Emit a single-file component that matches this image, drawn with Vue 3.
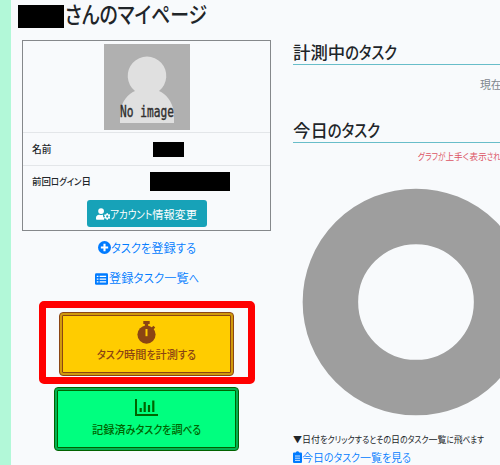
<script setup>
import { h } from 'vue'

// UI text with full-width kanji and condensed kana, fitted to a given line width
const UiText = ({ text, size, width }) => {
  const runs = text.match(/[ぁ-んァ-ヶー]+|[^ぁ-んァ-ヶー]+/g)
  const isKana = (run) => /^[ぁ-んァ-ヶー]/.test(run)
  const kanji = runs.filter((r) => !isKana(r)).join('').length
  const kana = text.length - kanji
  const kanaWidth = kana ? (width - kanji * size) / kana : 0
  let x = 0
  const nodes = runs.map((run) => {
    const w = run.length * (isKana(run) ? kanaWidth : size)
    const node = h('text', { x, y: size * 0.94, textLength: w, lengthAdjust: 'spacingAndGlyphs' }, run)
    x += w
    return node
  })
  return h('svg', { class: 'ui-text', width, height: size, 'font-size': size }, nodes)
}
UiText.props = ['text', 'size', 'width']
</script>

<template>
  <div class="page">
    <aside class="edge"></aside>
    <main class="content">
      <section class="left">
        <h1 class="title"><span class="mask mask-user"></span><UiText class="title-text" text="さんのマイページ" :size="22.5" :width="142" /></h1>
        <div class="profile">
          <div class="avatar-row">
            <svg class="avatar" viewBox="0 0 86 86">
              <rect width="86" height="86" fill="#b0b0b0" />
              <path d="M16 79V68C18 57 24 50 31 47A19.3 19.3 0 1 1 55 47C62 50 68 57 70 68V79Z" fill="#e0e0e0" />
              <text x="16" y="73" textLength="54" lengthAdjust="spacingAndGlyphs" class="avatar-text">No image</text>
            </svg>
          </div>
          <div class="row row-name">
            <span class="label"><UiText text="名前" :size="9.7" :width="19.4" /></span>
            <span class="cell"><span class="mask mask-name"></span></span>
          </div>
          <div class="row row-login">
            <span class="label"><UiText text="前回ログイン日" :size="9.5" :width="59" /></span>
            <span class="cell"><span class="mask mask-date"></span></span>
          </div>
          <button class="account">
            <svg class="icon-user" viewBox="0 0 640 512" fill="currentColor">
              <circle cx="224" cy="128" r="128" />
              <path d="M134 288h16c47 20 101 20 148 0h15c-8 54 3 102 42 137v79c4 5 8 8 12 8H48c-27 0-48-21-48-48v-42c0-74 60-134 134-134z" />
              <path fill-rule="evenodd" d="M465 224h62l9 43 26 15 42-14 31 54-33 29v30l33 29-31 54-42-14-26 15-9 43h-62l-9-43-26-15-42 14-31-54 33-29v-30l-33-29 31-54 42 14 26-15zM496 315a51 51 0 1 0 0 102 51 51 0 0 0 0-102z" />
            </svg>
            <UiText text="アカウント情報変更" :size="11.2" :width="87" />
          </button>
        </div>

        <a class="link link-add">
          <svg class="icon-round" viewBox="0 0 16 16"><circle cx="8" cy="8" r="8" fill="currentColor" /><path d="M8 3.5v9M3.5 8h9" stroke="#fff" stroke-width="2.6" /></svg>
          <UiText text="タスクを登録する" :size="12.3" :width="85" />
        </a>
        <a class="link link-list">
          <svg class="icon-list" viewBox="0 0 16 14"><rect width="16" height="14" rx="1.6" fill="currentColor" /><path d="M2.2 3.8h2M2.2 7.2h2M2.2 10.6h2M5.7 3.8h8M5.7 7.2h8M5.7 10.6h8" stroke="#fff" stroke-width="1.5" /></svg>
          <UiText text="登録タスク一覧へ" :size="12.2" :width="90" />
        </a>

        <div class="measure-wrap">
          <button class="action measure">
            <svg class="icon-watch" viewBox="0 0 19 23">
              <path d="M6.3 0h6.4v3h-1.5v2h-3.4V3H6.3z" fill="currentColor" />
              <path d="M13.8 7.2l2.6-2.4 1.8 1.8-2.4 2.6z" fill="currentColor" />
              <circle cx="9.5" cy="13.6" r="9.1" fill="currentColor" />
              <path d="M8.5 8h2v7.2h-2z" fill="#fc0" />
            </svg>
            <UiText text="タスク時間を計測する" :size="11.2" :width="99" />
          </button>
          <span class="highlight"></span>
        </div>
        <button class="action search">
          <svg class="icon-chart" viewBox="0 0 23 17">
            <path d="M1 0v16h22" fill="none" stroke="currentColor" stroke-width="2" />
            <path d="M5.7 9v4M9.7 3v10M14 6v7M18.3 1.5V13" stroke="currentColor" stroke-width="2.2" />
          </svg>
          <UiText text="記録済みタスクを調べる" :size="11.2" :width="109" />
        </button>
      </section>

      <section class="right">
        <h2 class="heading"><UiText text="計測中のタスク" :size="17.4" :width="104" /></h2>
        <p class="current"><UiText text="現在" :size="10.8" :width="21.6" /></p>
        <h2 class="heading h-today"><UiText text="今日のタスク" :size="17.4" :width="87" /></h2>
        <p class="notice"><UiText text="グラフが上手く表示され" :size="8.6" :width="82.5" /></p>
        <svg class="donut" viewBox="0 0 228 228">
          <circle cx="114" cy="114" r="85.6" fill="none" stroke="#9e9e9e" stroke-width="55.5" />
        </svg>
        <p class="hint"><UiText text="▼日付をクリックするとその日のタスク一覧に飛べます" :size="9" :width="191" /></p>
        <a class="link link-today">
          <svg class="icon-clip" viewBox="0 0 9 12"><path d="M1 1.5h1.8a1.8 1.8 0 0 1 3.4 0H8a1 1 0 0 1 1 1V11a1 1 0 0 1-1 1H1a1 1 0 0 1-1-1V2.5a1 1 0 0 1 1-1z" fill="currentColor" /><path d="M2 5h5M2 7.2h5M2 9.4h5" stroke="#fff" stroke-width=".8" /></svg>
          <UiText text="今日のタスク一覧を見る" :size="11" :width="109" />
        </a>
      </section>
    </main>
  </div>
</template>

<style>
body { margin: 0; background: #f8fafc; overflow: hidden; }
.ui-text { display: block; flex: none; overflow: visible; fill: currentColor; font-feature-settings: "palt"; }
</style>

<style scoped>
.page {
  display: flex;
  width: 500px;
  height: 465px;
  overflow: hidden;
  background: #f8fafc;
  color: #212529;
  font-family: "Noto Sans CJK JP", sans-serif;
}
.page * { box-sizing: border-box; }
.edge { flex: none; width: 11px; background: #b2f8d8; }
.content { display: flex; flex: none; width: 489px; }
.left { flex: none; width: 271px; padding-left: 7px; }
.title { display: flex; align-items: flex-start; margin: 0; height: 40px; padding-top: 5px; font-weight: 500; }
.title-text { margin: -3px 0 0 1px; }
.mask { display: block; background: #000; flex: none; }
.mask-user { width: 46px; height: 23px; }
.profile { width: 249px; height: 191px; margin-left: 4px; border: 1px solid #85888b; display: flex; flex-direction: column; }
.avatar-row { height: 91px; padding-top: 3px; display: flex; justify-content: center; }
.avatar { width: 86px; height: 86px; }
.avatar-text { font: 15px "DejaVu Sans Mono", monospace; fill: #303030; stroke: #303030; stroke-width: .4px; }
.row { display: flex; align-items: center; border-top: 1px solid #e3e6e9; padding-left: 9px; font-weight: 500; flex: none; }
.row-name { height: 33px; }
.row-login { height: 32px; }
.label { width: 77px; margin-top: -1px; }
.cell { flex: 1; display: flex; justify-content: center; }
.row-name .cell { padding-right: 42px; }
.mask-name { width: 31px; height: 15px; }
.mask-date { width: 80px; height: 19px; }
.row-login .cell { margin-top: -1px; }
.account { display: flex; align-items: center; align-self: center; width: 120px; height: 27px; margin-top: 3px; padding: 0 0 0 9px; border: 0; border-radius: 3px; background: #17a2b8; color: #fff; font-family: inherit; font-weight: 400; }
.icon-user { width: 14.5px; height: 12px; flex: none; }
.link { display: flex; align-items: center; color: #007bff; font-weight: 350; }
.link-add { height: 31px; margin-top: 1px; padding-left: 80px; }
.link-list { height: 31px; padding-left: 77px; }
.icon-round { width: 13px; height: 13px; }
.icon-list { width: 13px; height: 12px; margin-right: 1px; }
.measure-wrap { position: relative; margin: 18px 0 0 41px; width: 175px; height: 64px; }
.highlight { position: absolute; left: -20px; top: -11px; width: 216px; height: 83px; border: 7px solid #f00; border-radius: 5px; }
.action { display: flex; flex-direction: column; align-items: center; padding: 0; height: 64px; border-radius: 4px; font-family: inherit; font-weight: 500; }
.measure { width: 175px; background: linear-gradient(#fc0, #fc0) padding-box, #d19a0c border-box; color: #8b4513; border: 4px double #8b4513; }
.icon-watch { width: 19px; height: 23px; margin: 5px 0 4px; }
.search { width: 185px; margin: 11px 0 0 36px; background: linear-gradient(#00ff7f, #00ff7f) padding-box, #04b052 border-box; color: #006400; border: 4px double #006400; }
.icon-chart { width: 23px; height: 17px; margin: 8px 0 7px; }
.right { flex: none; width: 218px; padding: 40px 0 0 11px; }
.heading { display: flex; align-items: center; margin: 0; height: 25px; border-bottom: 1px solid #68bdc9; font-weight: 500; }
.current { margin: 9px 0 0; height: 24px; padding: 5px 0 0 187px; color: #7f878e; }
.h-today { margin-top: 20px; }
.notice { margin: 6px 0 0; height: 17px; padding: 3px 0 0 125px; color: #dc5564; }
.donut { display: block; width: 228px; height: 228px; margin: 22px 0 0 9px; }
.hint { margin: 15px 0 0; height: 16px; padding-top: 4px; }
.link-today { height: 20px; }
.icon-clip { width: 9px; height: 12px; }
</style>
